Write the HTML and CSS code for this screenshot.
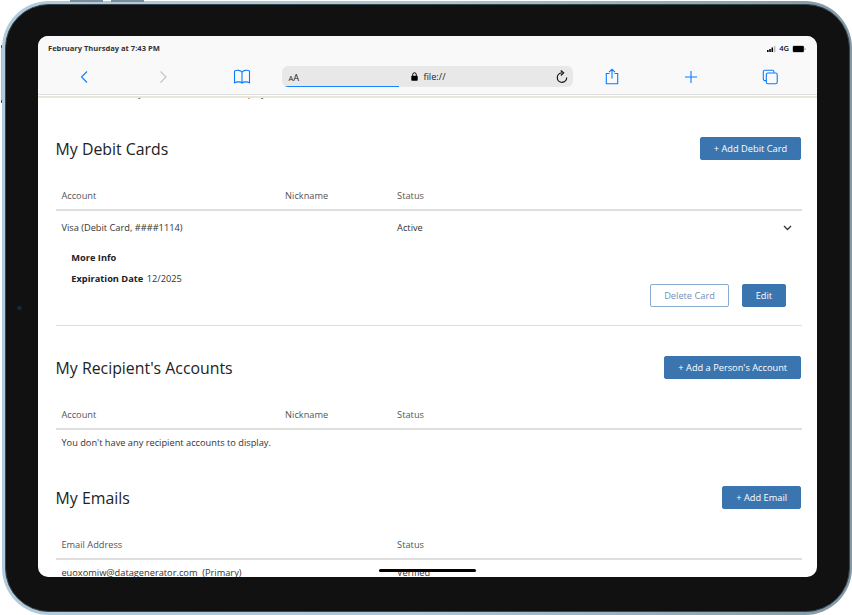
FILE: index.html
```html
<!DOCTYPE html>
<html lang="en">
<head>
<meta charset="utf-8">
<title>My Accounts</title>
<link rel="stylesheet" href="styles.css">
</head>
<body>
<div class="device">
  <i class="key key-a"></i><i class="key key-b"></i><i class="key key-side"></i>
  <div class="bezel">
    <i class="camera"></i>
    <div class="screen">
      <header class="chrome">
        <div class="statusbar">
          <span class="clock">February Thursday at 7:43 PM</span>
          <span class="signal">
            <svg width="9" height="7" viewBox="0 0 9 7"><path d="M0 5h1.6v2H0zM2.2 4h1.6v3H2.2zM4.5 2.5h1.6V7H4.5z"/><path fill="#bbb" d="M7 1h1.4v6H7z"/></svg>
            <span class="net">4G</span>
            <svg width="14" height="8" viewBox="0 0 14 8"><rect x=".4" y=".4" width="11.8" height="7.2" rx="1.5" fill="#aaa"/><rect x="1" y="1" width="10.8" height="6" rx="1"/><path fill="#999" d="M12.7 3h.8v2h-.8z"/></svg>
          </span>
        </div>
        <nav class="toolbar">
          <svg class="tool" viewBox="0 0 18 18"><path d="M12 3.5 6.5 9l5.500 5.500"/></svg>
          <svg class="tool off" viewBox="0 0 18 18"><path d="M6.500 3.500 12 9l-5.500 5.500"/></svg>
          <svg class="tool book" viewBox="0 0 18 18"><path d="M9 4.200C8 2.200 3.200 1.700 1.500 3.200v11.500C3.500 13.500 7.500 13.500 9 15c1.500-1.500 5.500-1.500 7.500-.3V3.200C14.800 1.700 10 2.200 9 4.200V15"/></svg>
          <div class="address">
            <span class="aa"><small>A</small>A</span>
            <span class="url"><svg width="7" height="9" viewBox="0 0 7 9"><rect x=".3" y="3.800" width="6.400" height="5" rx=".8"/><path d="M1.700 4V2.600a1.800 1.800 0 0 1 3.600 0V4" fill="none" stroke="#000" stroke-width="1"/></svg>file://</span>
            <svg class="reload" width="12" height="14" viewBox="0 0 12 14"><path d="M5.800 2.900A4.700 4.700 0 1 0 10.700 7.600M4.700.5 7.600 2.900 4.900 5.500" fill="none" stroke="#111" stroke-width="1.200"/></svg>
            <i class="progress"></i>
          </div>
          <svg class="tool share" viewBox="0 0 18 18"><path d="M6.500 5.500H3.300v10.300h11.400V5.500h-3.200M9 10.500V1.500M6 4.200l3-2.900 3 2.900"/></svg>
          <svg class="tool" viewBox="0 0 18 18"><path d="M9 3v12M3 9h12"/></svg>
          <svg class="tool tabs" viewBox="0 0 18 18"><rect x="5.300" y="5" width="10.900" height="10.800" rx="1.600"/><path d="M5 12.600H3.800a1.500 1.500 0 0 1-1.500-1.500V3.700a1.500 1.500 0 0 1 1.500-1.500h7.600a1.500 1.500 0 0 1 1.500 1.500v1"/></svg>
        </nav>
      </header>
      <main class="page">
        <div class="scrolled"><p>You don't have any external accounts to display.</p></div>
        <section class="cards">
          <div class="head"><h2>My Debit Cards</h2><button>+ Add Debit Card</button></div>
          <div class="row titles"><span>Account</span><span>Nickname</span><span>Status</span></div>
          <div class="row item"><span>Visa (Debit Card, ####1114)</span><span></span><span>Active</span>
            <svg width="9" height="6" viewBox="0 0 9 6"><path d="M1 1l3.500 3.500L8 1" fill="none" stroke="#333" stroke-width="1.300"/></svg></div>
          <div class="detail">
            <p><b>More Info</b></p>
            <p><b>Expiration Date</b> <span>12/2025</span></p>
            <div class="actions"><button class="plain">Delete Card</button><button class="edit">Edit</button></div>
          </div>
        </section>
        <section class="recipients">
          <div class="head"><h2>My Recipient's Accounts</h2><button>+ Add a Person's Account</button></div>
          <div class="row titles"><span>Account</span><span>Nickname</span><span>Status</span></div>
          <div class="row item empty">You don't have any recipient accounts to display.</div>
        </section>
        <section class="emails">
          <div class="head"><h2>My Emails</h2><button>+ Add Email</button></div>
          <div class="row titles"><span>Email Address</span><span></span><span>Status</span></div>
          <div class="row item"><span>euoxomiw@datagenerator.com&nbsp; (Primary)</span><span></span><span>Verified</span></div>
        </section>
      </main>
      <i class="home"></i>
    </div>
  </div>
</div>
</body>
</html>
```
FILE: styles.css
```css
* { box-sizing: border-box; }
body {
  margin: 0;
  height: 615px;
  overflow: hidden;
  background: #fff;
  font-family: "Open Sans", sans-serif;
  font-size: 9.25px;
  color: #333;
}
h2, p { margin: 0; font-weight: 400; }
.device {
  position: relative;
  width: 850px;
  height: 614px;
  margin: 1px 0 0 2px;
  padding: 3px 2px 3px 3px;
  border-radius: 47px;
  background: linear-gradient(90deg, #b0cbdc, #abc5d5 50%, #8298a6);
}
.key { position: absolute; background: #7d8c99; }
.key-a { left: 68px; top: -1px; width: 33px; height: 2px; }
.key-b { left: 109px; top: -1px; width: 33px; height: 2px; }
.key-side { left: -1px; top: 44px; width: 1px; height: 58px; background: #a7bfcd; border: solid #465560; border-width: 3px 0; }
.bezel {
  position: relative;
  height: 608px;
  padding: 31px 33px 33px 32px;
  border: 1px solid #39444b;
  border-radius: 44px;
  background: #111;
}
.camera { position: absolute; left: 11px; top: 301px; width: 5px; height: 4px; border-radius: 50%; background: #14294a; }
.screen {
  position: relative;
  width: 779px;
  height: 541px;
  border-radius: 10px;
  overflow: hidden;
  background: #fff;
  display: flex;
  flex-direction: column;
}
.chrome { height: 59px; background: #f9f9f9; border-bottom: 1px solid #dedede; flex: none; }
.statusbar { height: 24px; padding: 0 11px 0 10px; display: flex; justify-content: space-between; align-items: center; }
.clock { font-size: 7.55px; font-weight: 700; }
.signal { display: flex; align-items: center; gap: 3px; color: #111; padding-top: 1px; }
.net { font-size: 7.6px; font-weight: 600; margin-top: -1px; }
.toolbar { height: 33px; display: flex; align-items: center; padding: 0 38px 0 37px; justify-content: space-between; }
.tool { width: 18px; height: 18px; fill: none; stroke: #0a7cff; stroke-width: 1.1; }
.off { stroke: #c4c4c4; }
.address {
  position: relative;
  width: 291px;
  height: 21px;
  margin: 0 -31px 0 -29px;
  padding: 0 5px 0 6px;
  border-radius: 6px;
  overflow: hidden;
  background: #e8e8e8;
  display: grid;
  grid-template-columns: 1fr auto 1fr;
  align-items: center;
  color: #222;
}
.aa { padding-top: 1px; }
.aa small { font-size: 7.5px; }
.url { display: flex; align-items: center; gap: 5px; }
.reload { justify-self: end; }
.progress { position: absolute; left: 3px; bottom: 0; width: 114px; height: 1px; background: #1683ff; }
.page { flex: 1; padding: 0 15px 0 18px; border-top: 2px solid #e7e7dc; margin-top: 1px; overflow: hidden; }
.scrolled { height: 39px; padding-left: 5px; overflow: hidden; }
.scrolled p { height: 13px; line-height: 13px; margin-top: -11px; }
.head { display: flex; justify-content: space-between; align-items: center; height: 23px; padding-right: 1px; }
h2 { font-size: 15.85px; line-height: 24px; color: #222; margin-left: -.4px; }
button {
  height: 23px;
  padding: 0 12.9px;
  border: 1px solid #3b75af;
  border-radius: 2px;
  background: #3b75af;
  color: #fff;
  font: 9.25px "Open Sans", sans-serif;
  white-space: nowrap;
}
.row { display: grid; grid-template-columns: 223.7px 112px 1fr auto; align-items: center; padding: 0 10px 0 5.4px; }
.titles { height: 51px; padding-top: 21px; border-bottom: 2px solid #dedede; color: #555; }
.item { height: 34px; }
.item span { margin-top: -2px; }
.detail { height: 81px; padding: 4px 16px 0 15.3px; border-bottom: 1px solid #dedede; }
.detail p { height: 21px; line-height: 17px; }
.detail b { color: #222; margin-right: 1px; }
.actions { display: flex; justify-content: flex-end; gap: 13px; margin-top: -7px; }
.plain { background: #fff; color: #6f8fb8; border-color: #8aabcf; }
.cards { height: 219px; }
.recipients { height: 130px; }
.empty { display: block; height: 28px; line-height: 26px; }
.emails .item { height: 26px; }
.home { position: absolute; left: 341px; bottom: 5px; width: 97px; height: 3px; border-radius: 2px; background: #000; }
```
